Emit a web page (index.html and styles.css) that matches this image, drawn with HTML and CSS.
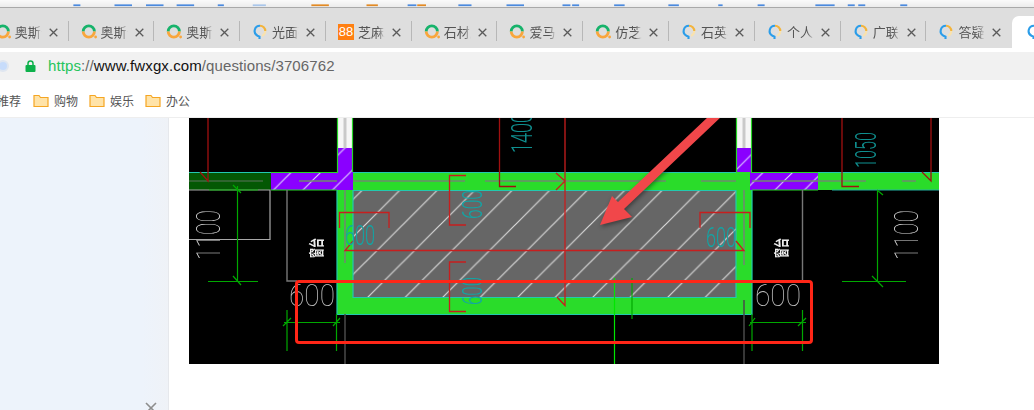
FILE: index.html
```html
<!DOCTYPE html>
<html lang="zh-CN">
<head>
<meta charset="utf-8">
<title>答疑</title>
<link rel="stylesheet" href="styles.css">
</head>
<body>
<svg class="defs" width="0" height="0" aria-hidden="true">
  <symbol id="ring" viewBox="0 0 16 16">
    <path class="ring-top" d="M2.2 7.5A5.6 5.6 0 0 1 13.4 7.5"/>
    <path class="ring-bot" d="M13.4 7.5A5.6 5.6 0 0 1 2.2 7.5"/>
    <circle class="ring-dot" cx="14.6" cy="13" r="1.4"/>
  </symbol>
  <symbol id="bulb" viewBox="0 0 16 16">
    <path class="bulb-pale" d="M13.3 7A5.3 5.3 0 0 1 10 11.9"/>
    <path class="bulb-gold" d="M13.3 7A5.3 5.3 0 0 0 8 1.7"/>
    <path class="bulb-blue" d="M8 1.7A5.3 5.3 0 0 0 5.5 11.7L7.5 12.6V15"/>
  </symbol>
  <symbol id="close" viewBox="0 0 9 9">
    <path class="close-x" d="M.7.7 8.3 8.3M8.3.7.7 8.3"/>
  </symbol>
  <symbol id="folder" viewBox="0 0 16 13">
    <path class="folder-shape" d="M1 1.5h5l1.5 2H15v9H1z"/>
  </symbol>
</svg>

<svg class="top-strip" width="1034" height="8" viewBox="0 0 1034 8" aria-hidden="true">
  <g class="strip-blue">
    <rect x="10" y="5" width="8" height="2"/><rect x="57" y="5" width="20" height="2"/><rect x="93" y="5" width="20" height="2"/><rect x="128" y="5" width="20" height="2"/><rect x="175" y="5" width="7" height="2"/><rect x="215" y="5" width="15" height="2" class="strip-pale"/><rect x="392" y="5" width="10" height="2"/><rect x="450" y="5" width="15" height="2"/><rect x="505" y="5" width="20" height="2"/><rect x="569" y="5" width="9" height="2"/><rect x="580" y="5" width="8" height="2"/><rect x="628" y="5" width="12" height="2"/><rect x="690" y="5" width="12" height="2"/><rect x="747" y="5" width="5" height="2"/><rect x="792" y="5" width="8" height="2"/><rect x="858" y="5" width="22" height="2"/><rect x="895" y="5" width="8" height="2"/><rect x="907" y="5" width="8" height="2"/><rect x="955" y="5" width="8" height="2"/>
  </g>
  <g class="strip-orange">
    <rect x="282" y="5" width="20" height="2"/><rect x="345" y="5" width="13" height="2"/><rect x="403" y="5" width="10" height="2"/>
  </g>
</svg>

<nav class="tabs">
  <div class="tab"><svg class="tab-icon"><use href="#ring"/></svg><span class="tab-title">奥斯卡</span><svg class="tab-close"><use href="#close"/></svg></div>
  <div class="tab"><svg class="tab-icon"><use href="#ring"/></svg><span class="tab-title">奥斯卡</span><svg class="tab-close"><use href="#close"/></svg></div>
  <div class="tab"><svg class="tab-icon"><use href="#ring"/></svg><span class="tab-title">奥斯卡</span><svg class="tab-close"><use href="#close"/></svg></div>
  <div class="tab"><svg class="tab-icon"><use href="#bulb"/></svg><span class="tab-title">光面砖</span><svg class="tab-close"><use href="#close"/></svg></div>
  <div class="tab"><span class="tab-icon badge">88</span><span class="tab-title">芝麻灰</span><svg class="tab-close"><use href="#close"/></svg></div>
  <div class="tab"><svg class="tab-icon"><use href="#ring"/></svg><span class="tab-title">石材店</span><svg class="tab-close"><use href="#close"/></svg></div>
  <div class="tab"><svg class="tab-icon"><use href="#ring"/></svg><span class="tab-title">爱马仕</span><svg class="tab-close"><use href="#close"/></svg></div>
  <div class="tab"><svg class="tab-icon"><use href="#ring"/></svg><span class="tab-title">仿芝麻</span><svg class="tab-close"><use href="#close"/></svg></div>
  <div class="tab"><svg class="tab-icon"><use href="#bulb"/></svg><span class="tab-title">石英石</span><svg class="tab-close"><use href="#close"/></svg></div>
  <div class="tab"><svg class="tab-icon"><use href="#bulb"/></svg><span class="tab-title">个人中</span><svg class="tab-close"><use href="#close"/></svg></div>
  <div class="tab"><svg class="tab-icon"><use href="#bulb"/></svg><span class="tab-title">广联达</span><svg class="tab-close"><use href="#close"/></svg></div>
  <div class="tab tab-last"><svg class="tab-icon"><use href="#bulb"/></svg><span class="tab-title">答疑解</span><svg class="tab-close"><use href="#close"/></svg></div>
  <div class="tab tab-active"><svg class="tab-icon"><use href="#bulb"/></svg></div>
</nav>

<div class="address-bar">
  <span class="site-dot"></span>
  <svg class="lock" viewBox="0 0 11 12" width="11" height="12" aria-hidden="true">
    <path class="lock-shackle" d="M3 5.5V3.4a2.5 2.5 0 0 1 5 0V5.5"/>
    <rect class="lock-body" x="0.5" y="5" width="10" height="7" rx="1"/>
  </svg>
  <div class="url"><span class="url-scheme">https</span>://<span class="url-host">www.fwxgx.com</span>/questions/3706762</div>
</div>

<div class="bookmarks">
  <span class="bm-cut">推荐</span>
  <span class="bm"><svg class="bm-icon"><use href="#folder"/></svg>购物</span>
  <span class="bm"><svg class="bm-icon"><use href="#folder"/></svg>娱乐</span>
  <span class="bm"><svg class="bm-icon"><use href="#folder"/></svg>办公</span>
</div>

<div class="page">
  <aside class="sidebar">
    <svg class="side-close" viewBox="0 0 12 12" width="12" height="12" aria-hidden="true"><path d="M1 1 11 11M11 1 1 11"/></svg>
  </aside>
  <main class="content">
    <svg class="cad" width="750" height="246" viewBox="189 118 750 246" role="img" aria-label="CAD 图纸">
      <defs>
        <pattern id="hatch" patternUnits="userSpaceOnUse" width="37.5" height="37.5" x="27.5" y="0">
          <path class="hatch-line" d="M-1 38.5 38.5 -1M-1 1 1 -1M36.5 38.5 38.5 36.5"/>
        </pattern>
        <pattern id="hatch2" patternUnits="userSpaceOnUse" width="29.5" height="29.5" x="21" y="0">
          <path class="hatch-line2" d="M-1 30.5 30.5 -1M-1 1 1 -1M28.5 30.5 30.5 28.5"/>
        </pattern>
      </defs>
      <rect class="bg" x="189" y="118" width="750" height="246"/>

      <!-- walls -->
      <rect class="wall" x="189" y="172" width="750" height="18"/>
      <rect class="wall-dark" x="189" y="172" width="82" height="18"/>
      <rect class="wall" x="337" y="190" width="415" height="124"/>
      <rect class="slab" x="353" y="190" width="383" height="108"/>
      <rect class="hatched" x="353" y="190" width="383" height="108"/>
      <path class="teal" d="M189 172.5H337M353 172.5H736M752 172.5H939M353 190.5H736M337 190V314.5H752V190M353 190V297.5H736V190"/>
      <path class="teal-dim" d="M832 190H939"/>

      <!-- columns -->
      <rect class="column" x="337" y="118" width="16" height="30"/>
      <rect class="column" x="736" y="118" width="16" height="30"/>
      <rect class="column-core" x="343.5" y="118" width="3" height="30"/>
      <rect class="column-core" x="742.5" y="118" width="3" height="30"/>
      <path class="purple" d="M337 148H353V190H271V172H337Z"/>
      <path class="purple" d="M736 148H752V172H818V190H750V172H736Z"/>
      <path class="hatched2" d="M337 148H353V190H271V172H337Z"/>
      <path class="hatched2" d="M736 148H752V172H818V190H750V172H736Z"/>
      <path class="edge-green" d="M337.5 118V172.5H271M352.5 118V172M271 190H337M736.5 118V172M751.5 118V172.5H818M752 190H818"/>

      <!-- centre lines -->
      <path class="center" d="M299 181H337M353 181H465M485 181H666M701 181H736M752 181H866M902 181H916M753 181H818"/>
      <path class="center-dark" d="M189 181H263"/>
      <path class="center" d="M345 190V263M744 190V265"/>
      <path class="center-deep" d="M345 314V364M744 300V364"/>

      <!-- outlines -->
      <path class="outline" d="M189 190H270V239.5H189"/>
      <path class="grey" d="M287 190V281H297M802.5 190V281"/>

      <!-- dimensions -->
      <path class="dim" d="M237.5 186V281M208 281.5H258M233 185 241 193M233 276 241 285M209 190H258"/>
      <path class="dim" d="M287 310V351M336.5 314V351M284 322.5H340M283 326 291 318M333 326 340 318"/>
      <path class="dim" d="M752 314V351M802.5 310V351M750 322.5H806M749 326 755 318M798 326 806 318"/>
      <path class="dim" d="M877.5 190V281M842 281.5H906M872 276 883 287M877 190 883 195"/>
      <path class="dim-bright" d="M614.5 278V364"/>
      <path class="dim" d="M632 278V319"/>

      <!-- red leaders -->
      <path class="leader-dark" d="M208 118V181L200 172M931 118V181L922 172M842 118V186.5H859M499.5 118V186.5H516"/>
      <path class="leader" d="M565 118V305.5L557 297M556 173 565 181 556 190"/>
      <path class="leader" d="M466 175.5H449.5V225H466M466 262H449.5V311.5H466"/>
      <path class="leader" d="M339.5 228V212.5H389V228M700 228V212.5H750V228"/>
      <path class="leader" d="M353 241 345 250.5H744L736 241"/>

      <!-- dimension text -->
      <text class="t-white" transform="translate(220 260) rotate(-90)" textLength="50" lengthAdjust="spacingAndGlyphs">1100</text>
      <text class="t-white" transform="translate(918 260) rotate(-90)" textLength="50" lengthAdjust="spacingAndGlyphs">1100</text>
      <text class="t-white t-600" x="289" y="305.5" textLength="46" lengthAdjust="spacingAndGlyphs">600</text>
      <text class="t-white t-600" x="755" y="305.5" textLength="46" lengthAdjust="spacingAndGlyphs">600</text>
      <text class="t-teal" transform="translate(532 153) rotate(-90)" textLength="40" lengthAdjust="spacingAndGlyphs">1400</text>
      <text class="t-teal" transform="translate(876 168) rotate(-90)" textLength="36" lengthAdjust="spacingAndGlyphs">1050</text>
      <text class="t-teal t-small" transform="translate(482 219) rotate(-90)" textLength="29" lengthAdjust="spacingAndGlyphs">600</text>
      <text class="t-teal t-small" transform="translate(482 305) rotate(-90)" textLength="28" lengthAdjust="spacingAndGlyphs">600</text>
      <text class="t-teal t-small" x="345" y="245" textLength="30" lengthAdjust="spacingAndGlyphs">600</text>
      <text class="t-teal t-small" x="706" y="247" textLength="30" lengthAdjust="spacingAndGlyphs">600</text>
      <text class="t-note" transform="translate(322 258) rotate(-90)" textLength="20" lengthAdjust="spacingAndGlyphs">窗台</text>
      <text class="t-note" transform="translate(787 258) rotate(-90)" textLength="20" lengthAdjust="spacingAndGlyphs">窗台</text>

      <!-- annotations -->
      <rect class="mark-box" x="296.5" y="281.5" width="515" height="61" rx="2.5"/>
      <path class="mark-arrow" d="M722 116 709 116 618 202 612 196 600 225 632 217 624 209Z"/>
    </svg>
  </main>
</div>
</body>
</html>
```
FILE: styles.css
```css
* { box-sizing: border-box; }
html, body { margin: 0; padding: 0; }
body {
  width: 1034px;
  height: 410px;
  overflow: hidden;
  background: #fff;
  font-family: "Liberation Sans", "Noto Sans CJK SC", sans-serif;
  display: flex;
  flex-direction: column;
}
.defs { position: absolute; }

/* top cut-off strip */
.top-strip { display: block; flex: none; background: linear-gradient(#fafafa, #ececec); border-bottom: 1px solid #a9a9a9; }
.strip-blue { fill: #4b8ade; }
.strip-pale { fill: #a9c6ea; }
.strip-orange { fill: #e28a24; }

/* tabs */
.tabs {
  flex: none;
  height: 40px;
  background: #dedede;
  display: flex;
  margin-left: -17.3px;
  width: 1060px;
  overflow: hidden;
}
.tab {
  flex: none;
  width: 85.8px;
  height: 40px;
  padding: 8px 0 0 12px;
  display: flex;
  align-items: center;
  position: relative;
  font-size: 13px;
  color: #555;
}
.tab::after {
  content: "";
  position: absolute;
  right: 0;
  top: 13px;
  height: 20px;
  width: 1px;
  background: #b7b7b7;
}
.tab-last::after, .tab-active::after { display: none; }
.tab-icon { width: 16px; height: 16px; flex: none; overflow: visible; }
.tab-title {
  width: 27px;
  margin-left: 4px;
  flex: none;
  white-space: nowrap;
  overflow: hidden;
  font-family: "Noto Sans CJK SC", sans-serif;
  line-height: 16px;
  -webkit-mask-image: linear-gradient(90deg, #000 20px, transparent 27px);
  mask-image: linear-gradient(90deg, #000 20px, transparent 27px);
}
.tab-close { width: 9px; height: 9px; margin-left: 7px; flex: none; }
.close-x { stroke: #5a5a5a; stroke-width: 1.3; fill: none; }
.tab-active {
  margin-top: 8px;
  height: 32px;
  width: 60px;
  padding: 0 0 0 14px;
  background: #fff;
  border-top-left-radius: 7px;
}
.badge {
  background: #ff7f11;
  color: #fff;
  font-size: 13px;
  line-height: 16px;
  text-align: center;
  font-family: "Liberation Sans", sans-serif;
  overflow: hidden;
}
.ring-top, .ring-bot { fill: none; stroke-width: 2.8; }
.ring-top { stroke: #17b36b; }
.ring-bot { stroke: #f9a63c; }
.ring-dot { fill: #f9a63c; }
.bulb-pale, .bulb-gold, .bulb-blue { fill: none; stroke-width: 2.1; }
.bulb-pale { stroke: #f9e2ae; }
.bulb-gold { stroke: #f3b43c; }
.bulb-blue { stroke: #2b9de9; }

/* address bar */
.address-bar {
  flex: none;
  height: 28px;
  margin-top: 4px;
  background: #f1f1f1;
  display: flex;
  align-items: center;
  padding: 0 0 1px 25px;
  position: relative;
}
.site-dot {
  position: absolute;
  left: -3px;
  top: 8px;
  width: 12px;
  height: 12px;
  border-radius: 50%;
  background: #c7dcfb;
  border: 2px solid #dfe6f0;
}
.lock { flex: none; }
.lock-shackle { fill: none; stroke: #0db14b; stroke-width: 1.5; }
.lock-body { fill: #0db14b; }
.url { margin-left: 12px; font-size: 15px; color: #666; white-space: nowrap; letter-spacing: .1px; }
.url-scheme { color: #24c45c; }
.url-host { color: #111; }

/* bookmarks */
.bookmarks {
  flex: none;
  height: 37px;
  background: #fff;
  display: flex;
  align-items: center;
  gap: 12px;
  margin-left: -3px;
  font-size: 12px;
  color: #555;
  font-family: "Noto Sans CJK SC", sans-serif;
  padding-top: 3px;
  white-space: nowrap;
}
.bm { display: flex; align-items: center; gap: 5px; width: 44px; flex: none; }
.bm-cut { width: 24px; flex: none; }
.bm-icon { width: 16px; height: 13px; flex: none; }
.folder-shape { fill: #ffe3a8; stroke: #f5a623; stroke-width: 1.2; }

/* page */
.page {
  flex: 1;
  display: flex;
  border-top: 1px solid #eee;
  min-height: 0;
}
.sidebar {
  width: 169px;
  flex: none;
  background: linear-gradient(90deg, #edf3fb 85%, #eff2f7);
  border-right: 1px solid #e6e8ec;
  position: relative;
}
.side-close { position: absolute; left: 145px; top: 284px; }
.side-close path { stroke: #8d8d8d; stroke-width: 1.6; fill: none; }
.content { flex: 1; padding-left: 20px; }

/* CAD drawing */
.cad { display: block; filter: blur(.35px); }
.bg { fill: #000; }
.wall { fill: #2adc2a; }
.wall-dark { fill: #045804; }
.slab { fill: #666; }
.hatched { fill: url(#hatch); }
.hatched2 { fill: url(#hatch2); }
.hatch-line { stroke: #d8d8d8; stroke-width: 1.2; fill: none; }
.hatch-line2 { stroke: #d9c8ff; stroke-width: 1.2; fill: none; }
.teal { stroke: #22c9b0; stroke-width: 1.2; fill: none; }
.teal-dim { stroke: #22b0a0; stroke-width: 1; fill: none; }
.column { fill: #f6f6f6; }
.column-core { fill: #c9c9c9; }
.purple { fill: #8a00ff; }
.edge-green { stroke: #26d826; stroke-width: 1.2; fill: none; }
.center { stroke: #6f8a6f; stroke-width: 1.6; fill: none; }
.center-dark { stroke: #3f6a3f; stroke-width: 1.4; fill: none; }
.center-deep { stroke: #4a4a4a; stroke-width: 1.5; fill: none; }
.outline { stroke: #a8a8a8; stroke-width: 1.2; fill: none; }
.grey { stroke: #777; stroke-width: 1.4; fill: none; }
.dim { stroke: #00a800; stroke-width: 1.2; fill: none; }
.dim-bright { stroke: #00e600; stroke-width: 1.2; fill: none; }
.leader { stroke: #c81e1e; stroke-width: 1.3; fill: none; }
.leader-dark { stroke: #a01010; stroke-width: 1.3; fill: none; }
.t-white, .t-teal { font-family: Roboto, "Liberation Sans", sans-serif; }
.t-white { fill: #d8d8d8; font-size: 34px; font-weight: 100; }
.t-600 { font-size: 32px; fill: #c4c4c4; }
.t-teal { fill: #0f8f8f; font-size: 29px; font-weight: 300; }
.t-small { fill: #12a5a5; font-size: 28px; }
.t-note { fill: #eee; font-size: 15px; font-weight: 700; font-family: "Noto Sans CJK SC", sans-serif; }
.mark-box { fill: none; stroke: #ff2617; stroke-width: 3; }
.mark-arrow { fill: #f1474a; filter: drop-shadow(1px 2px 2px rgba(0, 0, 0, .4)); }
```
